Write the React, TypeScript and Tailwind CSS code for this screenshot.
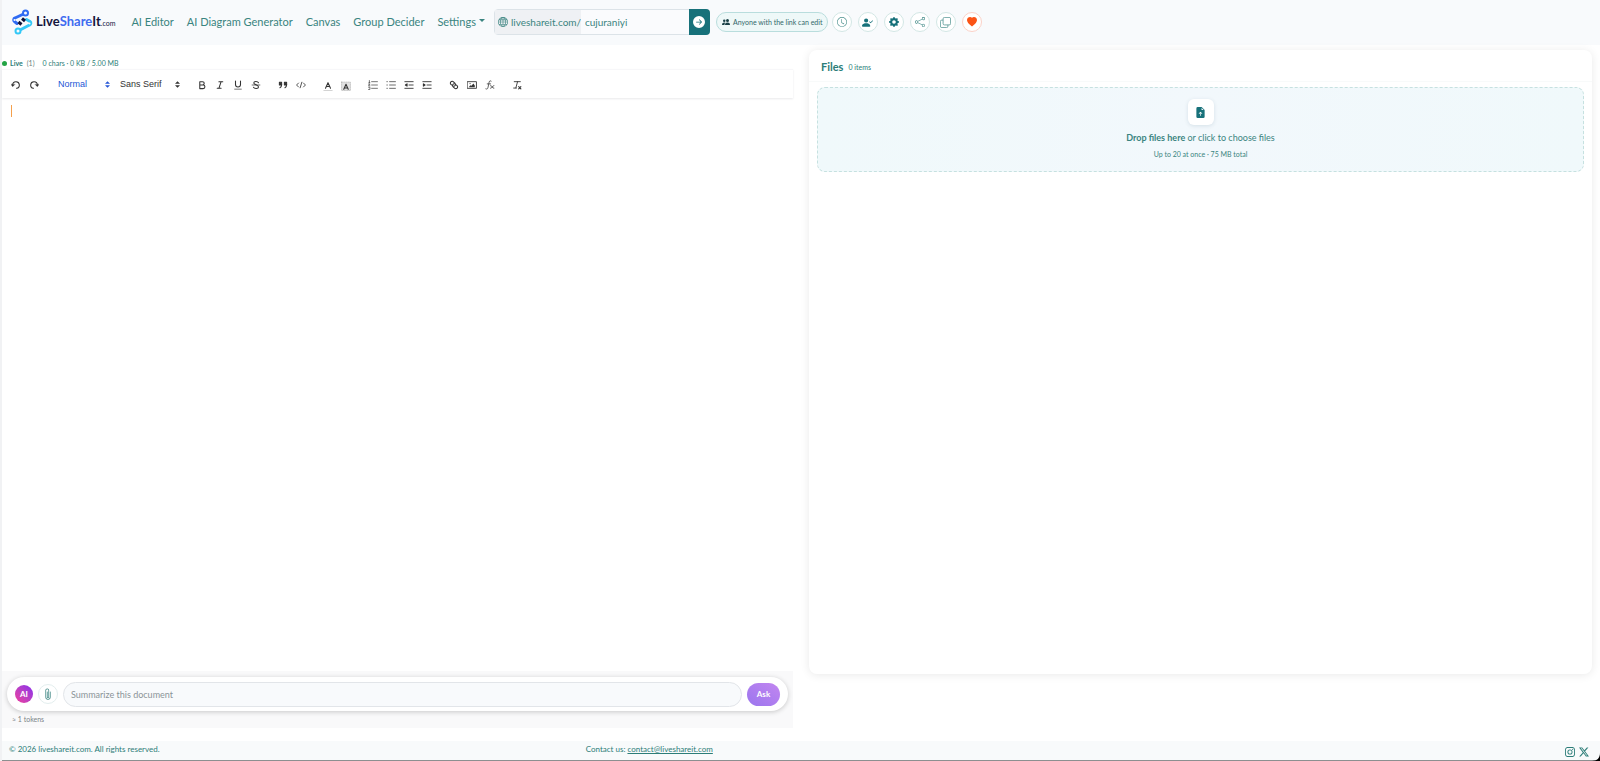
import React from 'react';
import {
    BsArrowRightCircleFill,
    BsClock,
    BsFileEarmarkArrowUpFill,
    BsGearFill,
    BsGlobe,
    BsHeartFill,
    BsInstagram,
    BsPaperclip,
    BsPeopleFill,
    BsPersonCheckFill,
    BsShare,
    BsTwitterX,
} from 'react-icons/bs';

const navLinks = ['AI Editor', 'AI Diagram Generator', 'Canvas', 'Group Decider'];

function CopyIcon() {
    return (
        <svg viewBox="0 0 16 16" className="size-[11px]" fill="none" stroke="currentColor" strokeWidth="1.1">
            <rect x="4.5" y="0.6" width="10.9" height="10.9" rx="2" />
            <path d="M11.5 11.5v1.9a2 2 0 0 1-2 2H2.6a2 2 0 0 1-2-2V6.5a2 2 0 0 1 2-2h1.9" />
        </svg>
    );
}

const headerActions = [
    { label: 'History', icon: <BsClock className="size-[10px]" /> },
    { label: 'Permissions', icon: <BsPersonCheckFill className="size-[11px] text-[#17717a]" /> },
    { label: 'Preferences', icon: <BsGearFill className="size-[10px] text-[#17717a]" /> },
    { label: 'Share', icon: <BsShare className="size-[10px]" /> },
    { label: 'Duplicate', icon: <CopyIcon /> },
];

function LogoMark() {
    return (
        <svg viewBox="0 0 44 52" className="h-[26px] w-[22px] shrink-0" fill="none" strokeLinecap="round" strokeLinejoin="round">
            <path d="M25 10 8 18a4 4 0 0 0-1 7l5 4" stroke="#2f6bf3" strokeWidth="6" />
            <path d="M31 21l7 4a4 4 0 0 1-1 7L18 42" stroke="#33c8f7" strokeWidth="6" />
            <path d="M22 19l6 5M15 26l6 5" stroke="#0f1238" strokeWidth="6" strokeLinecap="butt" />
            <circle cx="29" cy="8" r="5" fill="#f8fafc" stroke="#2f6bf3" strokeWidth="4" />
            <circle cx="7" cy="22" r="2" fill="#f8fafc" />
            <circle cx="37" cy="29" r="2" fill="#f8fafc" />
            <circle cx="14" cy="44" r="5" fill="#f8fafc" stroke="#33c8f7" strokeWidth="4" />
        </svg>
    );
}

function ToolButton({ label, children }: { label: string; children: React.ReactNode }) {
    return (
        <button type="button" aria-label={label} className="flex h-4 w-[18px] items-center justify-center">
            <svg viewBox="0 0 18 18" className="size-[10px]" fill="none" stroke="currentColor" strokeWidth="1.9" strokeLinecap="round" strokeLinejoin="round">
                {children}
            </svg>
        </button>
    );
}

function Picker({ label, value, className }: { label: string; value: string; className: string }) {
    return (
        <label className={`flex items-center justify-between ${className}`}>
            <select aria-label={label} className="min-w-0 flex-1 appearance-none bg-transparent">
                <option>{value}</option>
            </select>
            <svg viewBox="0 0 6 8" className="h-[7px] w-[5px]" fill="currentColor">
                <path d="M3 0l3 3H0zM3 8L0 5h6z" />
            </svg>
        </label>
    );
}

function Header() {
    return (
        <header className="flex h-[45px] items-center bg-[#f8fafc] pb-px pl-[9px]">
            <a href="/" className="flex items-center gap-[3px]">
                <LogoMark />
                <span className="flex items-baseline text-[13px] font-bold text-[#14143c]">
                    Live<span className="text-[#3f6cf0]">Share</span>It
                    <span className="text-[7px] font-normal">.com</span>
                </span>
            </a>
            <nav className="ml-4 flex items-center gap-[13px] text-[11px] text-[#3a8480]">
                {navLinks.map((link) => (
                    <a key={link} href="#" className="whitespace-nowrap">{link}</a>
                ))}
                <button type="button" className="flex items-center gap-[3px]">
                    Settings
                    <svg viewBox="0 0 6 3" className="mb-1 h-[3px] w-[6px]" fill="currentColor">
                        <path d="M0 0h6L3 3z" />
                    </svg>
                </button>
            </nav>

            <form className="ml-[9px] flex h-[26px] items-stretch rounded-sm border border-[#dce3e8] text-[10px] text-[#3a8480]">
                <label htmlFor="slug" className="flex w-[86px] items-center gap-[3px] bg-[#eff1f4] pl-[3px]">
                    <BsGlobe className="size-[10px] shrink-0" />
                    liveshareit.com/
                </label>
                <input id="slug" defaultValue="cujuraniyi" className="w-[108px] bg-[#fafbfd] pl-1 outline-none" />
                <button type="button" aria-label="Go" className="-my-px -mr-px flex w-[21px] items-center justify-center rounded-r-sm bg-[#17717a] text-white">
                    <BsArrowRightCircleFill className="size-3" />
                </button>
            </form>

            <button type="button" className="ml-[6px] flex h-5 w-[112px] items-center gap-[3px] rounded-full border border-[#b9dddd] bg-[#eef8f8] pl-[5px] text-[7px] whitespace-nowrap text-[#33686b]">
                <BsPeopleFill className="size-2 shrink-0 text-[#173f45]" />
                Anyone with the link can edit
            </button>
            <div className="ml-1 flex gap-[6px]">
                {headerActions.map((action) => (
                    <button key={action.label} type="button" aria-label={action.label} className="flex size-5 items-center justify-center rounded-full border border-[#d3e7e5] bg-white text-[#4b908d]">
                        {action.icon}
                    </button>
                ))}
                <button type="button" aria-label="Donate" className="flex size-5 items-center justify-center rounded-full border border-[#fbd2c8] bg-white text-[#fb5315]">
                    <BsHeartFill className="size-[10px]" />
                </button>
            </div>
        </header>
    );
}

function Toolbar() {
    return (
        <div className="flex h-[29px] items-center gap-[9px] border-t border-[#f7f7f9] pt-px pl-[5px] font-['Liberation_Sans',sans-serif] text-[9px] text-[#333] shadow-[0_1px_2px_#e9e9eb]">
            <div className="flex">
                <ToolButton label="Undo">
                    <path d="M3 9a6 6 0 1 1 7 6" />
                    <path d="M0 8l3 4 4-4z" fill="currentColor" strokeWidth="0.5" />
                </ToolButton>
                <ToolButton label="Redo">
                    <path d="M15 9a6 6 0 1 0-7 6" />
                    <path d="M18 8l-3 4-4-4z" fill="currentColor" strokeWidth="0.5" />
                </ToolButton>
            </div>
            <div className="flex">
                <Picker label="Heading" value="Normal" className="w-[62px] pr-1 pl-[6px] text-[#2455d6]" />
                <Picker label="Font" value="Sans Serif" className="w-[70px] pr-1 pl-[6px]" />
            </div>
            <div className="flex">
                <ToolButton label="Bold">
                    <path d="M5 3h5a3 3 0 0 1 0 6H5zM5 9h6a3 3 0 0 1 0 6.5H5z" />
                </ToolButton>
                <ToolButton label="Italic">
                    <path d="M7 3h7M4 15h7M11 3 7 15" />
                </ToolButton>
                <ToolButton label="Underline">
                    <path d="M4.5 2v6a4.5 4.5 0 0 0 9 0V2" />
                    <path d="M3 16.5h12" strokeWidth="1.2" />
                </ToolButton>
                <ToolButton label="Strike">
                    <path d="M2 9h14" strokeWidth="1.3" />
                    <path d="M13.5 5C12 2 5 2 5 5.5 5 9 13.5 8.5 13.5 12.5 13.5 16 6 16 4.5 13" />
                </ToolButton>
            </div>
            <div className="flex">
                <ToolButton label="Quote">
                    <path d="M2.5 4h4v5h-4zM11.5 4h4v5h-4z" fill="currentColor" />
                    <path d="M6.5 8c0 4-1 5-3 6M15.5 8c0 4-1 5-3 6" />
                </ToolButton>
                <ToolButton label="Code">
                    <path d="M4.5 5.5 1 9l3.5 3.5M13.5 5.5 17 9l-3.5 3.5M10.5 4l-3 10" strokeWidth="1.5" />
                </ToolButton>
            </div>
            <div className="flex pt-[2px]">
                <ToolButton label="Text colour">
                    <path d="M4.5 13 9 3l4.5 10M6 10h6" />
                    <path d="M1.5 17.5h15" strokeWidth="1" stroke="#999" />
                </ToolButton>
                <ToolButton label="Background colour">
                    <path d="M1 2h16v15H1z" fill="#e2e2e2" stroke="#aaa" strokeWidth="1" strokeDasharray="2 2" />
                    <path d="M5 15 9 6l4 9M6.5 12.5h5" />
                </ToolButton>
            </div>
            <div className="flex">
                <ToolButton label="Ordered list">
                    <path d="M6.5 3H17M6.5 9H17M6.5 15H17M2.5 1v4M1.5 5h2M1 7.5h2.5L1 10.5h2.5M1 13h2.5v4H1" strokeWidth="1.2" />
                </ToolButton>
                <ToolButton label="Bullet list">
                    <path d="M6.5 3H17M6.5 9H17M6.5 15H17M1.5 3h1M1.5 9h1M1.5 15h1" strokeWidth="1.3" />
                </ToolButton>
                <ToolButton label="Outdent">
                    <path d="M1.5 3h15M1.5 15h15M9 9h7.5" strokeWidth="1.6" />
                    <path d="M5.5 7v4L2.5 9z" fill="currentColor" />
                </ToolButton>
                <ToolButton label="Indent">
                    <path d="M1.5 3h15M1.5 15h15M9 9h7.5" strokeWidth="1.6" />
                    <path d="M2.5 7v4l3-2z" fill="currentColor" />
                </ToolButton>
            </div>
            <div className="flex">
                <ToolButton label="Link">
                    <path d="M7 10.5 3.5 8A3.2 3.2 0 0 1 8 3.2l3 3a3.2 3.2 0 0 1-2 5M11 7.5l3.5 2.5a3.2 3.2 0 0 1-4.5 4.8l-3-3a3.2 3.2 0 0 1 2-5" />
                </ToolButton>
                <ToolButton label="Image">
                    <path d="M1 3h16v12H1z" strokeWidth="1.6" />
                    <circle cx="5.5" cy="6.5" r="1" fill="currentColor" stroke="none" />
                    <path d="M4 13v-1.5l2-2 2 1 3.5-4L14 10v3z" fill="currentColor" stroke="none" />
                </ToolButton>
                <ToolButton label="Formula">
                    <path d="M11 2C8 0 7.5 3 7 6L5.5 13c-.5 3-2 4-4 3M4 7h6M10 10c3-1 3 6 6 5M16 10c-2 0-4 5-6 5" strokeWidth="1.4" />
                </ToolButton>
            </div>
            <ToolButton label="Clear formatting">
                <path d="M4 3h11M10 3 7 14M3 14.5h5" strokeWidth="1.6" />
                <path d="M12 12l4 4M16 12l-4 4" />
            </ToolButton>
        </div>
    );
}

function Editor() {
    return (
        <main className="flex w-1/2 flex-col pr-2">
            <div className="flex h-6 items-center pt-3 text-[7px] text-[#2c7d78]">
                <span className="size-[5px] rounded-full bg-[#22a344]" />
                <span className="ml-[3px] font-bold">Live</span>
                <span className="ml-1 text-[#6d7f80]">(1)</span>
                <span className="ml-2">0 chars · 0 KB / 5.00 MB</span>
            </div>
            <Toolbar />
            <div role="textbox" aria-label="Document" className="flex-1 pt-[7px] pl-[9px]">
                <div className="h-3 w-px bg-[#f5a04c]" />
            </div>
            <section className="bg-[#f9f9fa] px-[5px] pt-[6px] pb-[3px]">
                <form className="flex h-[34px] items-center rounded-full bg-white px-2 shadow-[0_1px_5px_rgba(0,0,0,0.2)]">
                    <span className="flex size-[18px] items-center justify-center rounded-full bg-linear-to-tr from-[#f0389a] to-[#8a27ec] text-[8px] font-bold text-white">AI</span>
                    <button type="button" aria-label="Attach" className="ml-[5px] flex size-5 items-center justify-center rounded-full border border-[#e3eeee] text-[#3a8480]">
                        <BsPaperclip className="size-3" />
                    </button>
                    <input aria-label="Prompt" placeholder="Summarize this document" className="ml-[5px] h-[25px] min-w-0 flex-1 rounded-full border border-[#e2e5e9] bg-[#f8fafc] px-[7px] text-[9px] outline-none placeholder:text-[#8b9498]" />
                    <button type="button" className="ml-[5px] h-[23px] w-[33px] rounded-full bg-linear-to-tr from-[#9b75ee] to-[#c286f0] text-[8px] font-bold text-white">Ask</button>
                </form>
                <p className="mt-[2px] pl-[5px] text-[7px] leading-3 text-[#7b8488]">≈ 1 tokens</p>
            </section>
        </main>
    );
}

function Files() {
    return (
        <aside className="flex w-1/2 flex-col px-2 pt-[5px] pb-[54px]">
            <div className="flex-1 rounded-lg bg-white shadow-[0_1px_10px_rgba(0,0,0,0.09)]">
                <div className="flex h-8 items-center gap-[5px] border-b border-[#f8fafa] pt-[3px] pl-3 text-[#2c7d78]">
                    <h2 className="text-[11px] font-bold">Files</h2>
                    <span className="pt-px text-[7px]">0 items</span>
                </div>
                <button type="button" className="mx-2 mt-[5px] flex h-[85px] w-[calc(100%-16px)] flex-col items-center rounded-lg border border-dashed border-[#c6e1e0] bg-linear-to-r from-[#f0f9fb] via-[#f2f8fc] to-[#f0f9fb] pt-[11px] text-[#3a8480]">
                    <span className="flex size-[26px] items-center justify-center rounded-md bg-white text-[#17717a] shadow-[0_1px_4px_rgba(0,60,80,0.12)]">
                        <BsFileEarmarkArrowUpFill className="size-[11px]" />
                    </span>
                    <span className="mt-[7px] text-[9px] leading-3"><b>Drop files here</b> or click to choose files</span>
                    <span className="mt-1 text-[7px] leading-3">Up to 20 at once · 75 MB total</span>
                </button>
            </div>
        </aside>
    );
}

export default function App() {
    return (
        <div className="flex min-h-screen flex-col border-l-2 border-[#f1f2f4] bg-white font-[Lato,sans-serif]">
            <Header />
            <div className="flex flex-1">
                <Editor />
                <Files />
            </div>
            <footer className="mt-[13px] flex h-5 items-center border-b border-[#8c8f90] bg-[#f8fafb] pr-[11px] pb-[3px] pl-[7px] text-[8px] text-[#2c7d78]">
                <p className="w-[36.5%]">© 2026 liveshareit.com. All rights reserved.</p>
                <p>Contact us: <a href="mailto:contact@liveshareit.com" className="underline">contact@liveshareit.com</a></p>
                <div className="ml-auto flex gap-1 pt-[5px]">
                    <a href="#" aria-label="Instagram"><BsInstagram className="size-[10px]" /></a>
                    <a href="#" aria-label="X"><BsTwitterX className="size-[10px]" /></a>
                </div>
            </footer>
            <svg viewBox="0 0 8 8" className="fixed right-0 bottom-0 size-2" aria-hidden="true">
                <path d="M8 0v8H0C5 8 8 5 8 0z" />
            </svg>
        </div>
    );
}
